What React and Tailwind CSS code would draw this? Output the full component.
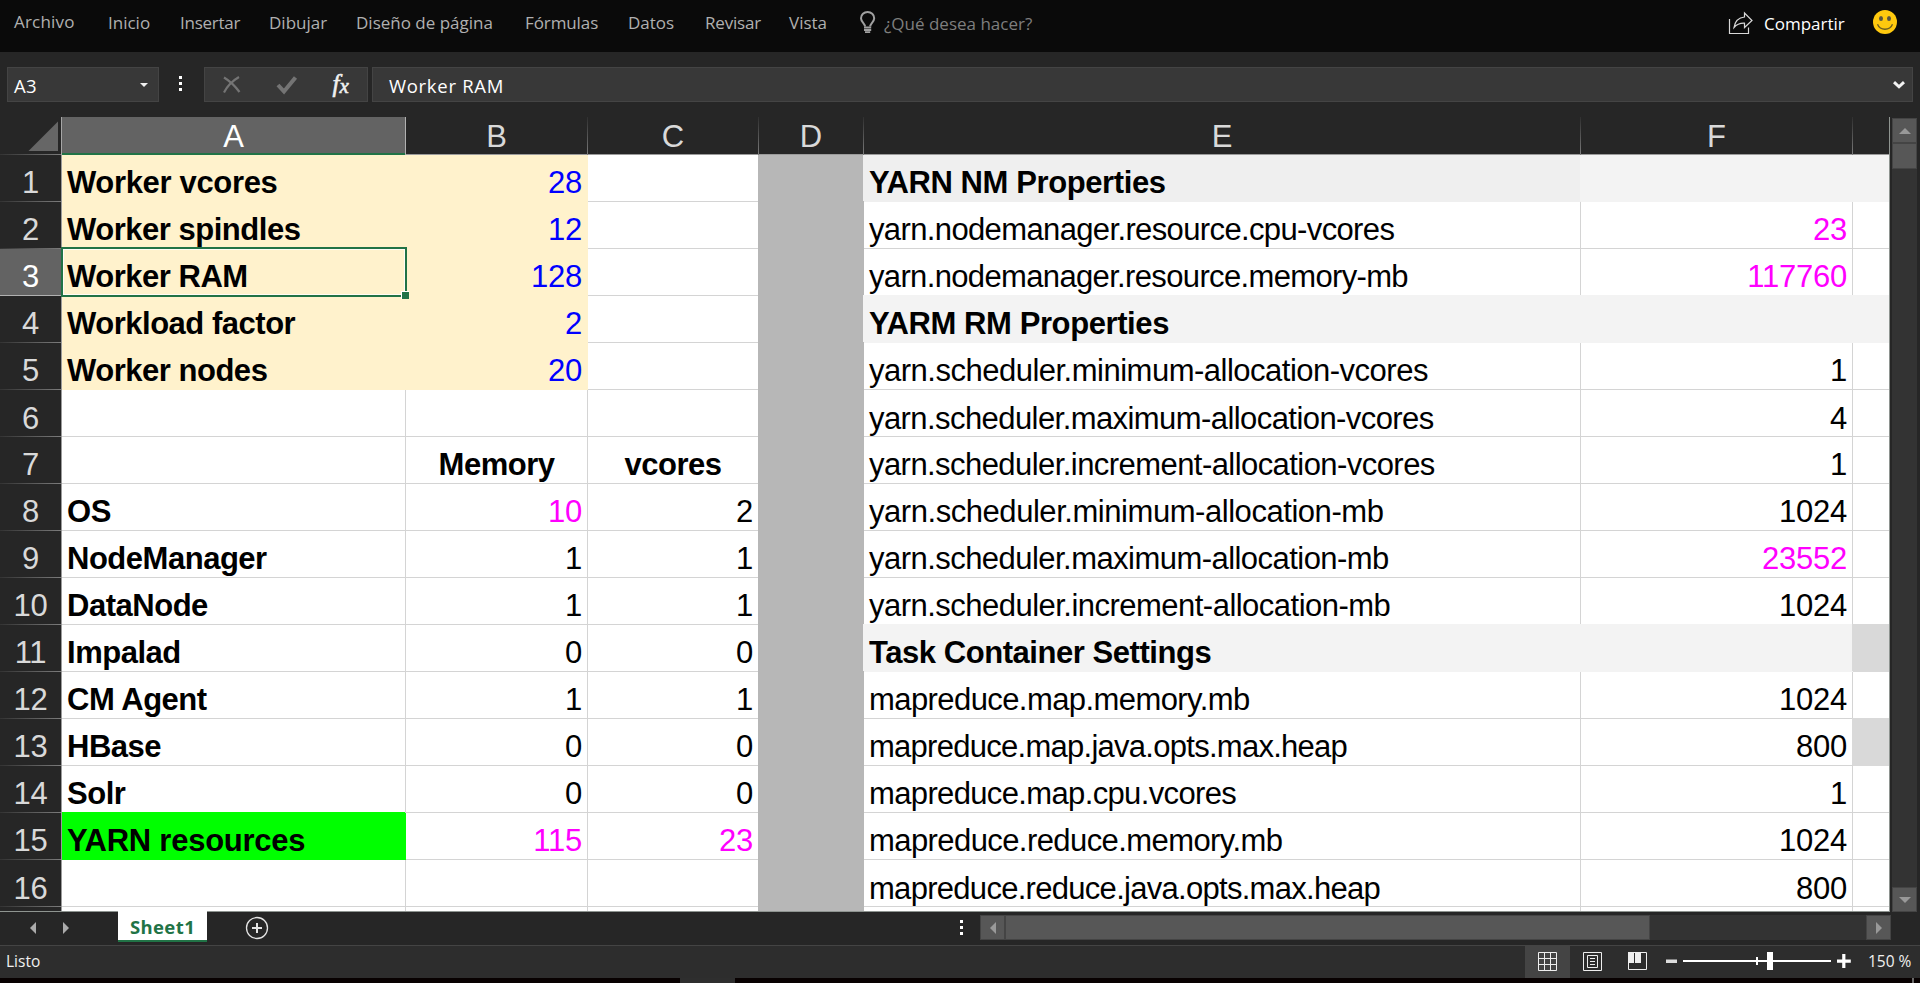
const MENU = [
  { label: 'Archivo', box: 'w-[94px] -mt-px tracking-[0.2px]' },
  { label: 'Inicio', box: 'w-[72px]' },
  { label: 'Insertar', box: 'w-[89px] tracking-[-0.25px]' },
  { label: 'Dibujar', box: 'w-[87px]' },
  { label: 'Diseño de página', box: 'w-[169px]' },
  { label: 'Fórmulas', box: 'w-[103px] tracking-[-0.1px]' },
  { label: 'Datos', box: 'w-[77px]' },
  { label: 'Revisar', box: 'w-[84px] tracking-[-0.2px]' },
  { label: 'Vista', box: 'w-[70px]' },
];

const COLUMNS = [
  { name: 'A', width: 'w-[344px]', selected: true },
  { name: 'B', width: 'w-[182px]' },
  { name: 'C', width: 'w-[171px]' },
  { name: 'D', width: 'w-[105px]' },
  { name: 'E', width: 'w-[717px]' },
  { name: 'F', width: 'w-[272px]' },
  { name: '', width: 'w-[36px]' },
];

const FILL = {
  cream: 'bg-[#fff2cc] border-[#fff2cc] shadow-[-1px_-1px_0_#fff2cc]',
  green: 'bg-[#00ff00] border-[#00ff00] shadow-[-1px_-1px_0_#00ff00]',
  gray: 'bg-[#b7b7b7] border-[#b7b7b7] shadow-[-1px_-1px_0_#b7b7b7]',
  light: 'bg-[#f3f3f3] border-[#f3f3f3] shadow-[-1px_-1px_0_#f3f3f3]',
  title: 'bg-[#efefef] border-[#efefef] shadow-[-1px_-1px_0_#efefef]',
  mid: 'bg-[#d9d9d9] border-[#d9d9d9] shadow-[-1px_-1px_0_#d9d9d9]',
  none: 'bg-white border-[#d4d4d4]',
};

const BLUE = 'text-[#0000ff]';
const PINK = 'text-[#ff00ff]';

const ROWS = [
  { a: 'Worker vcores', aTrack: 'tracking-[-0.33px]', b: '28', e: 'YARN NM Properties', eTrack: 'tracking-[-0.4px]', input: true, section: true, extra: 'light', eFill: 'title' },
  { a: 'Worker spindles', b: '12', e: 'yarn.nodemanager.resource.cpu-vcores', eTrack: 'tracking-[-0.63px]', f: '23', fColor: PINK, input: true },
  { a: 'Worker RAM', b: '128', e: 'yarn.nodemanager.resource.memory-mb', eTrack: 'tracking-[-0.65px]', f: '117760', fColor: PINK, input: true, selected: true },
  { a: 'Workload factor', b: '2', e: 'YARM RM Properties', eTrack: 'tracking-[-0.4px]', input: true, section: true, extra: 'light' },
  { a: 'Worker nodes', b: '20', e: 'yarn.scheduler.minimum-allocation-vcores', eTrack: 'tracking-[-0.5px]', f: '1', input: true },
  { e: 'yarn.scheduler.maximum-allocation-vcores', eTrack: 'tracking-[-0.57px]', f: '4', low: true },
  { b: 'Memory', c: 'vcores', head: true, e: 'yarn.scheduler.increment-allocation-vcores', eTrack: 'tracking-[-0.56px]', f: '1' },
  { a: 'OS', b: '10', bColor: PINK, c: '2', e: 'yarn.scheduler.minimum-allocation-mb', eTrack: 'tracking-[-0.45px]', f: '1024' },
  { a: 'NodeManager', b: '1', c: '1', e: 'yarn.scheduler.maximum-allocation-mb', eTrack: 'tracking-[-0.54px]', f: '23552', fColor: PINK },
  { a: 'DataNode', b: '1', c: '1', e: 'yarn.scheduler.increment-allocation-mb', eTrack: 'tracking-[-0.52px]', f: '1024' },
  { a: 'Impalad', b: '0', c: '0', e: 'Task Container Settings', eTrack: 'tracking-[-0.45px]', section: true, extra: 'mid' },
  { a: 'CM Agent', b: '1', c: '1', e: 'mapreduce.map.memory.mb', eTrack: 'tracking-[-0.58px]', f: '1024' },
  { a: 'HBase', b: '0', c: '0', e: 'mapreduce.map.java.opts.max.heap', eTrack: 'tracking-[-0.73px]', f: '800', extra: 'mid' },
  { a: 'Solr', b: '0', c: '0', e: 'mapreduce.map.cpu.vcores', eTrack: 'tracking-[-0.64px]', f: '1' },
  { a: 'YARN resources', aTrack: 'tracking-[-0.25px]', b: '115', bColor: PINK, c: '23', cColor: PINK, aFill: 'green', e: 'mapreduce.reduce.memory.mb', eTrack: 'tracking-[-0.58px]', f: '1024' },
  { e: 'mapreduce.reduce.java.opts.max.heap', eTrack: 'tracking-[-0.71px]', f: '800', low: true },
];

function Cell({ width, fill = 'none', color = 'text-black', align = 'text-left', track = 'tracking-[-0.24px]', bold, low, children }) {
  return (
    <div
      className={`relative h-[47px] shrink-0 whitespace-nowrap border-b border-r px-[5px] leading-[35px] ${low ? 'pt-[11px]' : 'pt-[10px]'} ${width} ${FILL[fill]} ${color} ${align} ${track} ${bold ? 'font-bold' : ''}`}
    >
      {children}
    </div>
  );
}

function Row({ row, index }) {
  const numAlign = row.head ? 'text-center' : 'text-right';
  const numTrack = row.head ? 'tracking-[-0.5px]' : 'tracking-[-0.24px]';
  return (
    <div className="flex h-[47px] shrink-0">
      <div
        className={`relative z-10 flex h-[47px] w-[62px] shrink-0 flex-col border-r text-center leading-[35px] tracking-[-0.24px] ${row.selected ? 'border-[#217346] bg-[#636363] text-white' : 'border-[#9b9b9b] bg-[#262626] text-[#d9d9d9]'}`}
      >
        <span className={`h-[46px] shrink-0 ${row.low ? 'pt-[11px]' : 'pt-[10px]'}`}>{index}</span>
        <span className={`h-px shrink-0 ${row.selected ? 'bg-[#b0b0b0]' : 'bg-linear-to-r from-[#333333] to-[#7c7c7c]'}`} />
      </div>
      <Cell width="w-[344px]" fill={row.input ? 'cream' : row.aFill} track={row.aTrack || 'tracking-[-0.48px]'} bold low={row.low}>
        {row.a}
        {row.selected && (
          <div className="absolute -left-[1px] -top-[2px] z-20 h-[50px] w-[346px] border-2 border-[#217346]">
            <div className="h-full w-full border border-white/80" />
            <div className="absolute -bottom-[4px] -right-[4px] h-[8px] w-[8px] border-l border-t border-white bg-[#217346]" />
          </div>
        )}
      </Cell>
      <Cell width="w-[182px]" fill={row.input ? 'cream' : 'none'} color={row.input ? BLUE : row.bColor} align={numAlign} track={numTrack} bold={row.head}>
        {row.b}
      </Cell>
      <Cell width="w-[171px]" color={row.cColor} align={numAlign} track={numTrack} bold={row.head}>
        {row.c}
      </Cell>
      <Cell width="w-[105px]" fill="gray" />
      <Cell width="w-[717px]" fill={row.eFill || (row.section ? 'light' : 'none')} track={row.eTrack} bold={row.section} low={row.low}>
        {row.e}
      </Cell>
      <Cell width="w-[272px]" fill={row.section ? 'light' : 'none'} color={row.fColor} align="text-right" low={row.low}>
        {row.f}
      </Cell>
      <Cell width="w-[37px]" fill={row.extra} />
    </div>
  );
}

function Dots() {
  return (
    <div className="flex w-[3px] shrink-0 flex-col gap-[3px]">
      <span className="h-[3px] bg-white" />
      <span className="h-[3px] bg-white" />
      <span className="h-[3px] bg-white" />
    </div>
  );
}

function Arrow({ d, w, h, color = '#999999' }) {
  return (
    <svg width={w} height={h} viewBox={`0 0 ${w} ${h}`} className="shrink-0">
      <path d={d} fill={color} />
    </svg>
  );
}

function Ribbon() {
  return (
    <div className="flex h-[52px] shrink-0 items-start bg-[#0a0a0a] pl-[14px] font-['Open_Sans',sans-serif] text-[17px] leading-[24px] text-[#b0b0b0]">
      {MENU.map((m) => (
        <span key={m.label} className={`shrink-0 whitespace-nowrap pt-[11px] ${m.box}`}>
          {m.label}
        </span>
      ))}
      <svg width="18" height="24" viewBox="0 0 18 24" className="mt-[11px] shrink-0" fill="none" stroke="#a0a0a0">
        <path d="M6 15.5C6 12.5 2 11 2 7.200a6.600 6.200 0 0 1 13.200 0C15.200 11 11.200 12.500 11.200 15.500" strokeWidth="2" />
        <path d="M5 16.500h7.200M5 19h7.200M6 21.200h5.200" strokeWidth="1.800" />
      </svg>
      <span className="ml-[7px] w-[844px] shrink-0 pt-[12px] text-[#7e7e7e]">¿Qué desea hacer?</span>
      <svg width="26" height="24" viewBox="0 0 26 24" className="mt-[11px] shrink-0" fill="none" stroke="#d8d8d8" strokeWidth="1.200">
        <path d="M1.500 8v14.500h19v-6" />
        <path d="M6 16.500C7 10 11 6.500 16.500 6V2l7.500 7.500-7.500 7v-4.300C12 12 9 13 6 16.500z" />
      </svg>
      <span className="ml-[10px] w-[109px] shrink-0 pt-[12px] text-white">Compartir</span>
      <svg width="24" height="24" viewBox="0 0 24 24" className="mt-[10px] shrink-0">
        <circle cx="12" cy="12" r="12" fill="#ffc90e" />
        <ellipse cx="8" cy="8.500" rx="2" ry="2.600" fill="#5a5440" />
        <ellipse cx="16" cy="8.500" rx="2" ry="2.600" fill="#5a5440" />
        <path d="M4.500 14.300c2.700 6.600 12.300 6.600 15 0" fill="none" stroke="#6b5d20" strokeWidth="1.400" />
      </svg>
    </div>
  );
}

function FormulaBar() {
  return (
    <div className="flex h-[65px] shrink-0 bg-[#262626] pl-[7px] pt-[15px] font-['Open_Sans',sans-serif] text-[18.5px] leading-[33px] text-white">
      <div className="flex h-[35px] w-[152px] items-center justify-between border border-[#444444] bg-[#383838] pl-[6px] pr-[10px]">
        <span className="pt-px tracking-[0.3px]">A3</span>
        <Arrow w={8} h={4} d="M0 0h8L4 4z" color="#f0f0f0" />
      </div>
      <div className="ml-[20px] pt-[9px]">
        <Dots />
      </div>
      <div className="ml-[22px] flex h-[35px] w-[164px] border border-[#444444] bg-[#383838]">
        <svg width="162" height="33" viewBox="0 0 162 33" fill="none">
          <path d="M19 9.500c5 3 11 8.500 15.500 14.500M34 9c-6 3.500-11.500 8.500-15 15.500" stroke="#747474" strokeWidth="2.200" />
          <path d="M73 17l6 6.500L90.500 9.500" stroke="#747474" strokeWidth="4" />
          <text x="127.500" y="23.500" fill="#f0f0f0" stroke="#f0f0f0" strokeWidth=".6" fontFamily="Liberation Serif, serif" fontStyle="italic" fontSize="25">f</text>
          <text x="134.500" y="24.500" fill="#f0f0f0" stroke="#f0f0f0" strokeWidth=".6" fontFamily="Liberation Serif, serif" fontStyle="italic" fontSize="21">x</text>
        </svg>
      </div>
      <div className="ml-[4px] flex h-[35px] w-[1541px] items-center justify-between border border-[#444444] bg-[#383838] pl-[16px] pr-[7px]">
        <span className="pt-px tracking-[0.7px]">Worker RAM</span>
        <svg width="12" height="8" viewBox="0 0 12 8" fill="none">
          <path d="M1 1.200l5 4.600 5-4.600" stroke="#f2f2f2" strokeWidth="3" />
        </svg>
      </div>
    </div>
  );
}

function ColumnHeaders() {
  return (
    <div className="relative z-10 flex h-[38px] shrink-0 text-center leading-[35px]">
      <div className="flex h-[38px] w-[62px] shrink-0">
        <div className="flex h-[38px] w-[61px] shrink-0 flex-col">
          <svg width="61" height="37" viewBox="0 0 61 37" className="shrink-0">
            <path d="M58 4.500V34H28.500z" fill="#666666" />
          </svg>
          <span className="h-px bg-linear-to-r from-[#333333] to-[#7c7c7c]" />
        </div>
        <span className="h-[38px] w-px bg-[#a6a6a6]" />
      </div>
      {COLUMNS.map((c, i) => (
        <div key={i} className={`flex h-[38px] shrink-0 ${c.width}`}>
          <div
            className={`h-[38px] flex-1 pt-[2px] ${c.selected ? 'border-b-2 border-[#217346] bg-[#636363] text-white' : 'border-b border-[#9b9b9b] text-[#d9d9d9]'}`}
          >
            {c.name}
          </div>
          {c.name !== '' && (
            <span className={`h-[38px] w-px ${c.selected ? 'bg-[#b0b0b0]' : 'bg-linear-to-b from-[#303030] to-[#7c7c7c]'}`} />
          )}
        </div>
      ))}
    </div>
  );
}

function VerticalScroll() {
  return (
    <div className="flex w-[25px] shrink-0 flex-col bg-[#333333]">
      <div className="flex h-[25px] items-center justify-center border border-[#444444] bg-[#575757]">
        <Arrow w={12} h={6} d="M0 6h12L6 0z" />
      </div>
      <div className="h-[26px] border border-[#444444] bg-[#575757]" />
      <div className="flex-1" />
      <div className="flex h-[25px] items-center justify-center border border-[#444444] bg-[#575757]">
        <Arrow w={12} h={6} d="M0 0h12L6 6z" />
      </div>
    </div>
  );
}

function SheetTabs() {
  return (
    <div className="flex h-[33px] shrink-0 items-start bg-[#262626] pl-[30px]">
      <div className="flex w-[88px] gap-[27px] pt-[10px]">
        <Arrow w={6} h={12} d="M6 0v12L0 6z" color="#ababab" />
        <Arrow w={6} h={12} d="M0 0v12L6 6z" color="#ababab" />
      </div>
      <div className="relative -mt-px h-[31px] w-[89px] shrink-0 border-b-2 border-[#217346] bg-white text-center font-['Open_Sans',sans-serif] text-[18.5px] font-bold leading-[31px] tracking-[0.4px] text-[#217346]">
        Sheet1
      </div>
      <svg width="24" height="24" viewBox="0 0 24 24" className="ml-[38px] mt-[4px] shrink-0" fill="none" stroke="#e4e4e4">
        <circle cx="12" cy="12" r="10.500" strokeWidth="1.300" />
        <path d="M12 7v10M7 12h10" strokeWidth="2" />
      </svg>
      <div className="ml-[691px] pt-[8px]">
        <Dots />
      </div>
      <div className="ml-[17px] mt-[3px] flex h-[25px] w-[911px] bg-[#333333]">
        <div className="flex w-[25px] items-center justify-center border border-[#444444] bg-[#575757]">
          <Arrow w={6} h={12} d="M6 0v12L0 6z" />
        </div>
        <div className="w-[645px] border border-[#444444] bg-[#575757]" />
        <div className="flex-1" />
        <div className="flex w-[25px] items-center justify-center border border-[#444444] bg-[#575757]">
          <Arrow w={6} h={12} d="M0 0v12L6 6z" />
        </div>
      </div>
    </div>
  );
}

function StatusBar() {
  return (
    <div className="flex h-[33px] shrink-0 border-t border-[#444444] bg-[#2d2d2d] font-['Open_Sans',sans-serif] text-[15.5px] leading-[31px] text-[#f0f0f0]">
      <span className="w-[1525px] shrink-0 pl-[6px]">Listo</span>
      <div className="flex h-[32px] w-[45px] shrink-0 bg-[#444444] pl-[13px] pt-[6px]">
        <svg width="19" height="19" viewBox="0 0 19 19" fill="none" stroke="#eeeeee">
          <path d="M.5.5h18v18H.5zM6.500 0v19M12.500 0v19M0 6.500h19M0 12.500h19" />
        </svg>
      </div>
      <svg width="19" height="19" viewBox="0 0 19 19" className="ml-[13px] mt-[6px] shrink-0" fill="none" stroke="#eeeeee">
        <path d="M.5.5h18v18H.5zM4.500 3.500h10v12h-10zM7 6.500h5M7 9.500h5M7 12.500h5" />
      </svg>
      <svg width="19" height="19" viewBox="0 0 19 19" className="ml-[26px] mt-[6px] shrink-0" fill="none">
        <path d="M.5.5h18v17H.5z" stroke="#eeeeee" />
        <path d="M0 0h6v11H0zM7 0h6v11H7z" fill="#eeeeee" />
      </svg>
      <svg width="190" height="32" viewBox="0 0 190 32" className="ml-[17px] shrink-0" fill="#ffffff">
        <path d="M2 13.500h11v3.500H2z" fill="#dddddd" />
        <path d="M19 14h148v2H19zM92 11h2v8h-2zM103 6h6v18h-6z" />
        <path d="M173 13.500h5.200V8h3.200v5.500h5.400v3.200h-5.400V22h-3.200v-5.300H173z" />
      </svg>
      <span className="ml-[14px] shrink-0">150 %</span>
    </div>
  );
}

export default function App() {
  return (
    <div className="flex h-[983px] w-[1920px] flex-col overflow-hidden bg-[#262626] font-['Liberation_Sans',Arial,sans-serif] text-[31px]">
      <Ribbon />
      <FormulaBar />
      <div className="flex h-[795px] shrink-0">
        <div className="flex w-[1890px] shrink-0 flex-col overflow-hidden border-b border-r border-[#8e9490]">
          <ColumnHeaders />
          {ROWS.map((row, i) => (
            <Row key={i} row={row} index={i + 1} />
          ))}
          <Row row={{}} index="" />
        </div>
        <div className="ml-[2px] flex pt-px">
          <VerticalScroll />
        </div>
      </div>
      <SheetTabs />
      <StatusBar />
      <div className="flex h-[5px] shrink-0 bg-[#080101] pl-[680px]">
        <span className="h-[5px] w-[55px] bg-[#2e2e2e]" />
        <span className="ml-[1177px] h-[5px] w-[2px] bg-[#6a6a6a]" />
      </div>
    </div>
  );
}
